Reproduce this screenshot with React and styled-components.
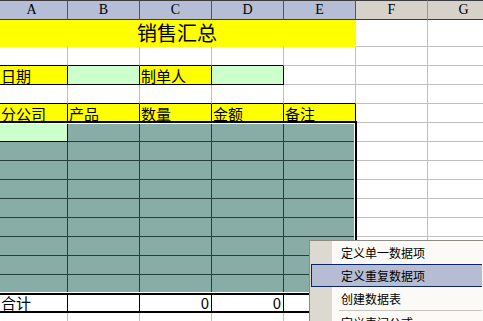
import React from 'react';
import styled, { createGlobalStyle } from 'styled-components';

const GlobalStyle = createGlobalStyle`
  html, body { margin: 0; padding: 0; background: #fff; overflow: hidden; }
  * { box-sizing: border-box; }
`;

const GRID = '#c0c0c0';
const INK = '#000';
const SEL = '#263f3b';
const YELLOW = '#ffff00';
const GREEN = '#ccffcc';
const TEAL = '#88ada6';
const CJK = `"Noto Sans CJK SC", "Noto Sans", sans-serif`;

const Screen = styled.div`
  position: relative;
  width: 483px;
  height: 321px;
  overflow: hidden;
  font-family: ${CJK};
`;

const Sheet = styled.div`
  display: grid;
  width: 500px;
  grid-template-columns: 68px repeat(6, 72px);
  grid-template-rows: 20px 27px repeat(13, 19px) 19px 19px;
`;

const Head = styled.div`
  display: flex;
  align-items: center;
  justify-content: center;
  padding-right: ${p => (p.$first ? '4px' : '0')};
  background: ${p => (p.$sel ? '#b6bdd6' : '#d6d2ca')};
  border-top: 1px solid #3c3c3c;
  border-bottom: 1px solid #3c3c3c;
  border-right: 1px solid ${p => (p.$sel ? '#4a5474' : '#9c988f')};
  font-family: "Liberation Serif", serif;
  font-size: 14px;
  color: #000;
`;

const Cell = styled.div`
  grid-column: span ${p => p.$span || 1};
  display: flex;
  align-items: ${p => (p.$big ? 'center' : 'flex-end')};
  justify-content: ${p => (p.$align === 'right' ? 'flex-end' : p.$align === 'center' ? 'center' : 'flex-start')};
  padding: 0 2px 1px 1px;
  background: ${p => p.$bg || '#fff'};
  border-right: 1px solid ${p => p.$rb || (p.$bg ? p.$bg : GRID)};
  border-bottom: ${p => p.$bw || 1}px solid ${p => p.$bb || (p.$bg ? p.$bg : GRID)};
  font-size: ${p => (p.$big ? '20px' : '15px')};
  line-height: 1;
  color: #000;
  white-space: nowrap;
`;

const Selection = styled.div`
  position: absolute;
  left: -10px;
  top: 121px;
  width: 367px;
  height: 174px;
  border: 2px solid #000;
  box-shadow: inset 0 0 0 1px #fff;
  pointer-events: none;
`;

const Menu = styled.div`
  position: absolute;
  left: 309px;
  top: 240px;
  width: 174px;
  padding: 0 1px;
  border: 1px solid #8d8a82;
  border-right: none;
  background: linear-gradient(to right, #dcd9d0 0 22px, #fbfaf6 22px);
`;

const Item = styled.div`
  height: 23px;
  display: flex;
  align-items: center;
  padding-left: 29px;
  font-size: 12px;
  line-height: 1;
  color: #000;
  border: 1px solid ${p => (p.$active ? '#0a246a' : 'transparent')};
  border-right: none;
  background: ${p => (p.$active ? '#b6bdd3' : 'transparent')};
`;

const Separator = styled.div`
  height: 1px;
  margin-left: 28px;
  background: #c8c5bc;
`;

const letters = ['A', 'B', 'C', 'D', 'E', 'F', 'G'];

const blank = (n, props = {}) => Array.from({ length: n }, () => ({ ...props }));

const tail = () => blank(2);

const rows = [
  [{ span: 5, bg: YELLOW, text: '销售汇总', align: 'center', big: true }, ...tail()],
  [...blank(4, { bb: INK }), {}, ...tail()],
  [
    { bg: YELLOW, rb: INK, bb: INK, text: '日期' },
    { bg: GREEN, rb: INK, bb: INK },
    { bg: YELLOW, rb: INK, bb: INK, text: '制单人' },
    { bg: GREEN, rb: INK, bb: INK },
    {},
    ...tail(),
  ],
  [...blank(5, { bb: INK }), ...tail()],
  [
    ...['分公司', '产品', '数量', '金额', '备注'].map(t => ({ bg: YELLOW, rb: INK, bb: INK, text: t })),
    ...tail(),
  ],
  ...Array.from({ length: 9 }, (_, r) => [
    ...Array.from({ length: 5 }, (_, c) => ({
      bg: r === 0 && c === 0 ? GREEN : TEAL,
      rb: c === 4 ? INK : r === 0 && c === 0 ? INK : SEL,
      bb: r === 0 && c === 0 ? INK : SEL,
    })),
    ...tail(),
  ]),
  [
    { rb: INK, bb: INK, bw: 2, text: '合计' },
    { rb: INK, bb: INK, bw: 2 },
    { rb: INK, bb: INK, bw: 2, text: '0', align: 'right' },
    { rb: INK, bb: INK, bw: 2, text: '0', align: 'right' },
    { rb: INK, bb: INK, bw: 2 },
    ...tail(),
  ],
  [...blank(5), ...tail()],
];

const menuItems = ['定义单一数据项', '定义重复数据项', '创建数据表'];

export default function App() {
  return (
    <Screen>
      <GlobalStyle />
      <Sheet>
        {letters.map((l, i) => (
          <Head key={l} $sel={i < 5} $first={i === 0}>{l}</Head>
        ))}
        {rows.map((row, r) =>
          row.map((c, i) => (
            <Cell
              key={`${r}-${i}`}
              $span={c.span}
              $bg={c.bg}
              $rb={c.rb}
              $bb={c.bb}
              $bw={c.bw}
              $align={c.align}
              $big={c.big}
            >
              {c.text}
            </Cell>
          ))
        )}
      </Sheet>
      <Selection />
      <Menu>
        {menuItems.map((t, i) => (
          <Item key={t} $active={i === 1}>{t}</Item>
        ))}
        <Separator />
        <Item>定义表间公式</Item>
      </Menu>
    </Screen>
  );
}
